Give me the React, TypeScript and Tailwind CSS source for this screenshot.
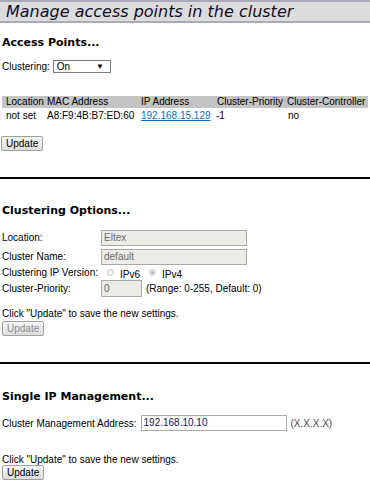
import React from 'react';

const font = { fontFamily: '"Liberation Sans", Arial, sans-serif' };
const verdana = { fontFamily: '"DejaVu Sans", Verdana, sans-serif' };

const Btn: React.FC<{ disabled?: boolean }> = ({ disabled }) => (
  <button
    className={
      'h-[15px] px-[4px] border border-[#a0a0a0] rounded-[2px] bg-gradient-to-b from-[#f6f6f6] to-[#dddddd] text-[10px] leading-[13px] ' +
      (disabled ? 'text-[#8a8a8a]' : 'text-black')
    }
  >
    Update
  </button>
);

const Rule = () => <div className="h-[2px] bg-black w-full" />;

const App: React.FC = () => {
  return (
    <div className="w-[370px] h-[494px] overflow-hidden bg-white text-[10px] text-black" style={font}>
      {/* title */}
      <div className="h-[23px] border-y-2 border-[#a8aab8] bg-[#dcdcdc] pl-[6px]">
        <span className="italic text-[16px] leading-[19px] text-[#10102a]" style={verdana}>
          Manage access points in the cluster
        </span>
      </div>

      {/* access points */}
      <div className="px-[2px] pt-[12px]">
        <h2 className="font-bold text-[11px] leading-[16px]" style={verdana}>Access Points...</h2>
        <div className="mt-[8px] flex items-center gap-[3px]">
          <span>Clustering:</span>
          <div className="w-[58px] h-[13px] border border-[#7a7a7a] flex items-center justify-between pl-[3px] pr-[6px] leading-[11px]">
            <span>On</span>
            <span className="text-[8px]">▼</span>
          </div>
        </div>
      </div>

      <div className="mt-[22px] mx-[2px]">
        <div className="grid grid-cols-[43px_94px_76px_70px_1fr] bg-[#c4c4c4] h-[12px] leading-[12px] whitespace-nowrap">
          <span className="pl-[4px]">Location</span>
          <span className="pl-[2px]">MAC Address</span>
          <span className="pl-[2px]">IP Address</span>
          <span className="pl-[2px]">Cluster-Priority</span>
          <span className="pl-[2px]">Cluster-Controller</span>
        </div>
        <div className="grid grid-cols-[43px_94px_76px_70px_1fr] h-[16px] leading-[16px] whitespace-nowrap">
          <span className="pl-[4px]">not set</span>
          <span className="pl-[2px]">A8:F9:4B:B7:ED:60</span>
          <span className="pl-[2px]"><a className="text-[#0b6fc4] underline">192.168.15.129</a></span>
          <span className="pl-[1px]">-1</span>
          <span className="pl-[3px]">no</span>
        </div>
      </div>

      <div className="mt-[12px] px-[1px]">
        <Btn />
      </div>

      <div className="mt-[26px]">
        <Rule />
      </div>

      {/* clustering options */}
      <div className="px-[2px] pt-[24px]">
        <h2 className="font-bold text-[11px] leading-[16px]" style={verdana}>Clustering Options...</h2>
        <div className="mt-[9px] flex flex-col">
          <div className="h-[19px] flex items-center">
            <span className="w-[99px]">Location:</span>
            <div className="w-[146px] h-[16px] border border-[#a9a9a9] bg-[#ecebe5] text-[#6d6d6d] pl-[2px] leading-[14px]">Eltex</div>
          </div>
          <div className="h-[19px] flex items-center">
            <span className="w-[99px]">Cluster Name:</span>
            <div className="w-[146px] h-[16px] border border-[#a9a9a9] bg-[#ecebe5] text-[#6d6d6d] pl-[2px] leading-[14px]">default</div>
          </div>
          <div className="h-[13px] flex items-center">
            <span className="w-[105px]">Clustering IP Version:</span>
            <span className="w-[7px] h-[7px] rounded-full border border-[#c8c8c8] bg-[#f2f2f2]" />
            <span className="ml-[6px] mt-[3px]">IPv6</span>
            <span className="ml-[9px] w-[7px] h-[7px] rounded-full border border-[#c8c8c8] bg-[#f2f2f2] flex items-center justify-center">
              <span className="w-[3px] h-[3px] rounded-full bg-[#b0b0b0]" />
            </span>
            <span className="ml-[6px] mt-[3px]">IPv4</span>
          </div>
          <div className="h-[19px] flex items-center">
            <span className="w-[99px]">Cluster-Priority:</span>
            <div className="w-[41px] h-[17px] border border-[#a9a9a9] bg-[#ecebe5] text-[#6d6d6d] pl-[2px] leading-[15px]">0</div>
            <span className="ml-[4px]">(Range: 0-255, Default: 0)</span>
          </div>
        </div>
        <div className="mt-[10px] leading-[11px]">Click "Update" to save the new settings.</div>
        <div className="mt-[2px]">
          <Btn disabled />
        </div>
      </div>

      <div className="mt-[26px]">
        <Rule />
      </div>

      {/* single ip */}
      <div className="px-[2px] pt-[25px]">
        <h2 className="font-bold text-[11px] leading-[16px]" style={verdana}>Single IP Management...</h2>
        <div className="mt-[10px] flex items-center">
          <span>Cluster Management Address:</span>
          <div className="ml-[4px] w-[146px] h-[16px] border border-[#a9a9a9] bg-white text-[#14105a] pl-[2px] leading-[14px]">192.168.10.10</div>
          <span className="ml-[4px] text-[#4a4a4a]">(X.X.X.X)</span>
        </div>
        <div className="mt-[23px] leading-[11px]">Click "Update" to save the new settings.</div>
        <div>
          <Btn />
        </div>
      </div>
    </div>
  );
};

export default App;
